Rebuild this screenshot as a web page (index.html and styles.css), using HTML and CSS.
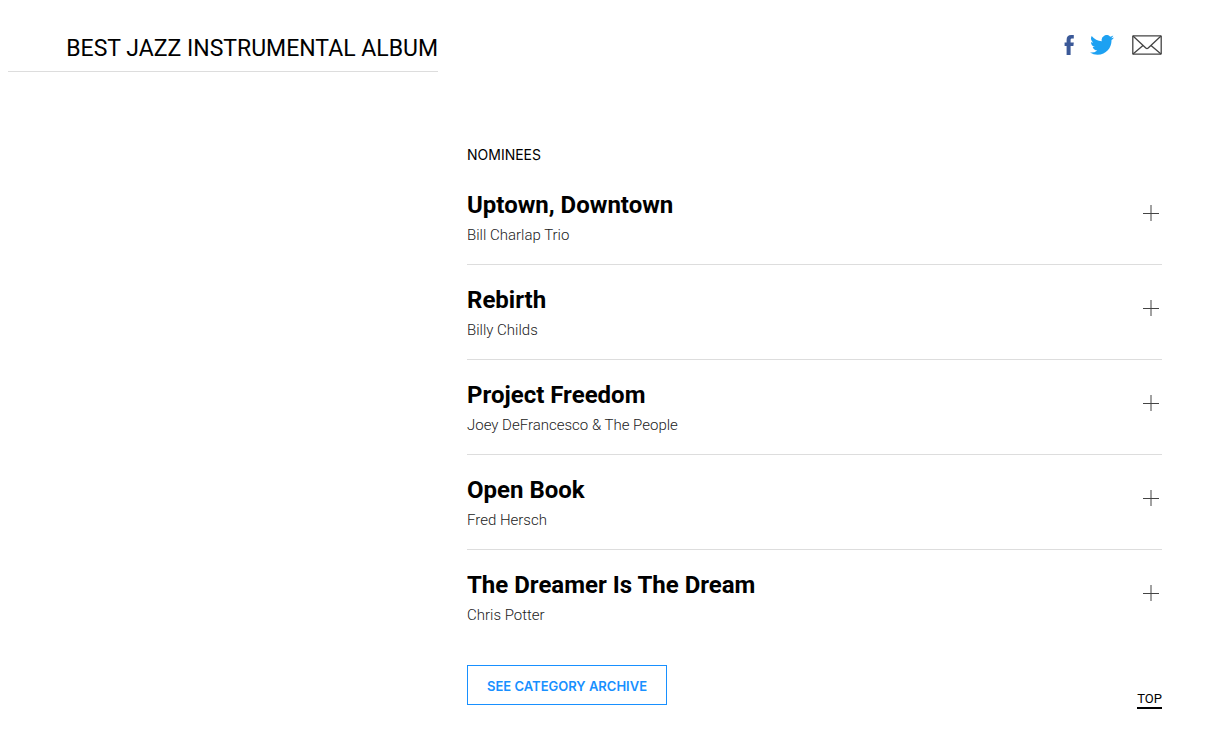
FILE: index.html
```html
<!DOCTYPE html>
<html lang="en">
<head>
    <meta charset="UTF-8">
    <meta name="viewport" content="width=device-width, initial-scale=1.0">
    <title>Best Jazz Instrumental Album</title>
    <link rel="stylesheet" href="styles.css">
</head>
<body>
    <section class="category">
        <header class="category-header">
            <h2 class="category-title">BEST JAZZ INSTRUMENTAL ALBUM</h2>
            <div class="share">
                <a href="#" aria-label="Share on Facebook">
                    <svg width="10" height="20" viewBox="0 0 10 20"><path fill="#3b5998" d="M2.600 20V11H.6V7.400h2V4.900C2.600 1.800 4.200 0 7.200 0H9.800v3.500H8.200C7 3.500 6.600 4 6.600 5v2.400h3.200L9.400 11H6.600v9z"/></svg>
                </a>
                <a href="#" aria-label="Share on Twitter">
                    <svg width="24" height="20" viewBox="0 0 24 20"><path fill="#1da1f2" d="M24 2.400a9.800 9.800 0 0 1-2.800.8A5 5 0 0 0 23.300.5a10 10 0 0 1-3.100 1.200A4.900 4.900 0 0 0 11.800 6.200 14 14 0 0 1 1.700 1a4.900 4.900 0 0 0 1.500 6.600A4.900 4.900 0 0 1 1 7v.1a4.900 4.900 0 0 0 3.900 4.800 5 5 0 0 1-2.200.1 4.900 4.900 0 0 0 4.600 3.400A9.900 9.900 0 0 1 0 17.500 14 14 0 0 0 7.500 19.700c9.100 0 14.300-7.700 14-14.600A10 10 0 0 0 24 2.400z"/></svg>
                </a>
                <a href="#" class="share-mail" aria-label="Share by email">
                    <svg width="30" height="20" viewBox="0 0 30 20"><g fill="none" stroke="#444" stroke-width="1.300"><rect x=".8" y=".8" width="28.400" height="18.400" rx=".5"/><path d="M1 1 13.800 13q1.200 1 2.400 0L29 1M1 19 11 10.500M29 19 19 10.500"/></g></svg>
                </a>
            </div>
        </header>

        <div class="nominees">
            <h3 class="nominees-label">NOMINEES</h3>
            <ul class="nominee-list">
                <li class="nominee">
                    <div>
                        <h4 class="nominee-title">Uptown, Downtown</h4>
                        <p class="nominee-artist">Bill Charlap Trio</p>
                    </div>
                    <button type="button" class="expand" aria-label="Expand"><svg width="18" height="18" viewBox="0 0 18 18"><path d="M9 1v16M1 9.500h16"/></svg></button>
                </li>
                <li class="nominee">
                    <div>
                        <h4 class="nominee-title">Rebirth</h4>
                        <p class="nominee-artist">Billy Childs</p>
                    </div>
                    <button type="button" class="expand" aria-label="Expand"><svg width="18" height="18" viewBox="0 0 18 18"><path d="M9 1v16M1 9.500h16"/></svg></button>
                </li>
                <li class="nominee">
                    <div>
                        <h4 class="nominee-title">Project Freedom</h4>
                        <p class="nominee-artist">Joey DeFrancesco &amp; The People</p>
                    </div>
                    <button type="button" class="expand" aria-label="Expand"><svg width="18" height="18" viewBox="0 0 18 18"><path d="M9 1v16M1 9.500h16"/></svg></button>
                </li>
                <li class="nominee">
                    <div>
                        <h4 class="nominee-title">Open Book</h4>
                        <p class="nominee-artist">Fred Hersch</p>
                    </div>
                    <button type="button" class="expand" aria-label="Expand"><svg width="18" height="18" viewBox="0 0 18 18"><path d="M9 1v16M1 9.500h16"/></svg></button>
                </li>
                <li class="nominee">
                    <div>
                        <h4 class="nominee-title">The Dreamer Is The Dream</h4>
                        <p class="nominee-artist">Chris Potter</p>
                    </div>
                    <button type="button" class="expand" aria-label="Expand"><svg width="18" height="18" viewBox="0 0 18 18"><path d="M9 1v16M1 9.500h16"/></svg></button>
                </li>
            </ul>
            <div class="category-footer">
                <a href="#" class="archive-link">SEE CATEGORY ARCHIVE</a>
                <a href="#" class="top-link">TOP</a>
            </div>
        </div>
    </section>
</body>
</html>
```
FILE: styles.css
```css
body {
    margin: 0;
    background-color: #fff;
    color: #000;
    font-family: Roboto, "Liberation Sans", sans-serif;
}

h2, h3, h4, p, ul {
    margin: 0;
    padding: 0;
}

.category {
    display: grid;
    grid-template-columns: 86fr 139fr;
    column-gap: 29px;
    padding: 32px 51px 32px 8px;
}

.category-header {
    display: grid;
    grid-column: 1 / -1;
    grid-template-columns: subgrid;
}

.category-title {
    padding: 1px 0 6px;
    border-bottom: 1px solid #ddd;
    font-size: 23px;
    font-weight: 400;
    line-height: 32px;
    text-align: right;
    white-space: nowrap;
}

.share {
    display: flex;
    justify-content: flex-end;
    align-items: flex-start;
    gap: 16px;
    padding-top: 3px;
}

.share svg {
    display: block;
}

.share-mail {
    padding-left: 2px;
}

.nominees {
    grid-column: 2;
    padding-top: 73px;
}

.nominees-label {
    margin-bottom: 5px;
    font-family: Inter, "Liberation Sans", sans-serif;
    font-size: 14px;
    font-weight: 400;
    line-height: 20px;
}

.nominee-list {
    list-style: none;
}

.nominee {
    display: flex;
    justify-content: space-between;
    align-items: center;
    padding: 19px 0;
    border-bottom: 1px solid #ddd;
}

.nominee:last-child {
    border-bottom: none;
}

.nominee-title {
    margin-bottom: 4px;
    font-size: 24px;
    font-weight: 700;
    line-height: 32px;
}

.nominee-artist {
    color: #222;
    font-size: 15px;
    font-weight: 300;
    line-height: 20px;
}

.expand {
    padding: 0 2px 8px 0;
    border: none;
    background: none;
    cursor: pointer;
}

.expand svg {
    display: block;
    fill: none;
    stroke: #444;
}

.category-footer {
    display: flex;
    justify-content: space-between;
    align-items: flex-start;
    padding-top: 21px;
}

.archive-link {
    padding: 2px 19px 0;
    border: 1px solid #1890ff;
    color: #1890ff;
    font-family: Inter, "Liberation Sans", sans-serif;
    font-size: 13px;
    font-weight: 600;
    line-height: 36px;
    text-decoration: none;
}

.top-link {
    margin-top: 26px;
    border-bottom: 2px solid #000;
    color: #000;
    font-size: 13px;
    line-height: 16px;
    text-decoration: none;
}
```
